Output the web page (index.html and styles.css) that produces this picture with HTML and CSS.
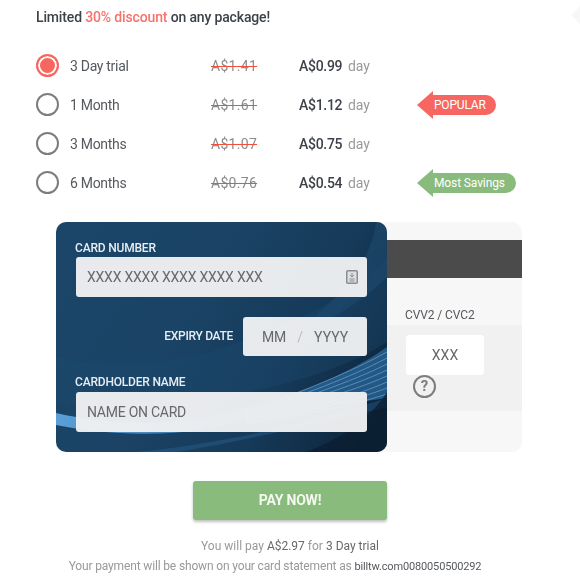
FILE: index.html
```html
<!DOCTYPE html>
<html lang="en">

<head>
  <meta charset="UTF-8">
  <meta name="viewport" content="width=device-width, initial-scale=1.0">
  <title>Payment</title>
  <link rel="stylesheet" href="styles.css">
</head>

<body>
  <div class="page">
    <span class="corner-mark"></span>
    <p class="promo">Limited <span class="promo-hot">30% discount</span> on any package!</p>

    <!-- Packages -->
    <div class="plans">
      <div class="plan">
        <span class="radio radio-on"></span>
        <span class="plan-name">3 Day trial</span>
        <span class="plan-old">A$1.41</span>
        <span class="plan-price">A$0.99</span>
        <span class="plan-unit">day</span>
      </div>
      <div class="plan">
        <span class="radio"></span>
        <span class="plan-name">1 Month</span>
        <span class="plan-old">A$1.61</span>
        <span class="plan-price">A$1.12</span>
        <span class="plan-unit">day</span>
        <span class="tag tag-red">POPULAR</span>
      </div>
      <div class="plan">
        <span class="radio"></span>
        <span class="plan-name">3 Months</span>
        <span class="plan-old">A$1.07</span>
        <span class="plan-price">A$0.75</span>
        <span class="plan-unit">day</span>
      </div>
      <div class="plan">
        <span class="radio"></span>
        <span class="plan-name">6 Months</span>
        <span class="plan-old">A$0.76</span>
        <span class="plan-price">A$0.54</span>
        <span class="plan-unit">day</span>
        <span class="tag tag-green">Most Savings</span>
      </div>
    </div>

    <!-- Card form -->
    <div class="card">
      <div class="card-front">
        <svg class="card-art" viewBox="0 0 331 230" preserveAspectRatio="none">
          <defs>
            <linearGradient id="waveFill" x1="0" y1="0" x2="1" y2="0">
              <stop offset="0" stop-color="#5a9fd8" />
              <stop offset="0.25" stop-color="#4a8cc4" />
              <stop offset="0.6" stop-color="#2b6a9f" stop-opacity=".7" />
              <stop offset="1" stop-color="#2a689c" stop-opacity=".75" />
            </linearGradient>
          </defs>
          <path d="M210 0H331V55C300 85 270 100 235 115C285 75 315 40 320 0Z" fill="#1f4d74" opacity=".5" />
          <path d="M0 135C70 150 130 140 190 118C250 96 300 70 331 35V120C285 150 220 165 150 180C90 190 40 190 0 180Z" fill="#1c4a70" opacity=".35" />
          <path d="M0 191C45 201 95 205 150 195C215 183 285 158 331 125V176C285 183 220 192 150 207C95 216 40 211 0 203Z" fill="url(#waveFill)" />
          <g fill="none" stroke="#7db4e0" stroke-width=".7" stroke-opacity=".8">
            <path d="M190 190C245 170 295 150 331 130" />
            <path d="M190 192C245 174 295 155 331 136" />
            <path d="M190 194C245 177 295 160 331 142" />
            <path d="M190 196C245 180 295 165 331 148" />
            <path d="M190 198C245 184 295 170 331 154" />
            <path d="M190 200C245 188 295 176 331 160" />
            <path d="M190 201C245 191 295 180 331 166" />
            <path d="M190 202C245 194 295 184 331 172" />
          </g>
          <path d="M80 230C160 222 240 205 331 176V185C250 205 170 222 120 230Z" fill="#2b6a9f" opacity=".35" />
          <path d="M250 230C290 215 315 195 331 170V230Z" fill="#0b1e30" opacity=".75" />
        </svg>

        <label class="field-label field-label-first">CARD NUMBER</label>
        <div class="input input-number">
          <span>XXXX XXXX XXXX XXXX XXX</span>
          <svg class="chip" viewBox="0 0 12 14">
            <rect x=".75" y=".75" width="10.5" height="12.5" rx="1" fill="#dcdfe2" stroke="#8b8d90" stroke-width="1.5" />
            <path d="M6 3v3.5M4.2 5.2L6 7l1.8-1.8M3.5 9h5M3.5 11h5" fill="none" stroke="#8b8d90" />
          </svg>
        </div>

        <div class="expiry">
          <label class="field-label expiry-label">EXPIRY DATE</label>
          <div class="input input-expiry">
            <span>MM</span>
            <span class="slash">/</span>
            <span>YYYY</span>
          </div>
        </div>

        <label class="field-label">CARDHOLDER NAME</label>
        <div class="input input-name">NAME ON CARD</div>
      </div>

      <div class="card-back">
        <div class="strip"></div>
        <label class="cvv-label">CVV2 / CVC2</label>
        <div class="cvv-band">
          <div class="cvv-input">XXX</div>
          <span class="help">?</span>
        </div>
      </div>
    </div>

    <!-- Pay -->
    <button class="pay-btn">PAY NOW!</button>
    <p class="note note-pay">You will pay <span class="note-strong">A$2.97</span> for <span class="note-strong">3 Day trial</span></p>
    <p class="note note-statement">Your payment will be shown on your card statement as <span class="note-dark">billtw.com0080050500292</span></p>
  </div>
</body>

</html>
```

FILE: styles.css
```css
/* General body styling */
body {
  font-family: Roboto, Arial, sans-serif;
  margin: 0;
  padding: 0;
  background: #fff;
  overflow: hidden;
}

.page {
  position: relative;
  width: 580px;
  height: 579px;
  overflow: hidden;
  filter: blur(0.35px);
}

/* Small faded diamond in the corner */
.corner-mark {
  position: absolute;
  top: 8px;
  right: -8px;
  width: 14px;
  height: 14px;
  background: #f7f7f7;
  transform: rotate(45deg);
}

.promo {
  margin: 0;
  padding: 9px 0 0 36px;
  font-size: 14px;
  line-height: 16px;
  font-weight: 500;
  letter-spacing: -0.15px;
  color: #3d4148;
}

.promo-hot {
  color: #f8716c;
}

/* Package rows */
.plans {
  margin-top: 21px;
  padding-left: 36px;
}

.plan {
  display: flex;
  align-items: center;
  height: 39px;
  font-size: 14px;
  color: #55585d;
}

.radio {
  box-sizing: border-box;
  flex: none;
  width: 23px;
  height: 23px;
  border: 2px solid #7d7d7d;
  border-radius: 50%;
}

.radio-on {
  border-color: #f76660;
  background: #f76660;
  box-shadow: inset 0 0 0 2px #fff;
}

.plan-name {
  width: 141px;
  margin-left: 11px;
  letter-spacing: -0.3px;
}

.plan-old {
  width: 88px;
  letter-spacing: 0.3px;
  color: #8c8c8c;
  text-decoration: line-through;
  text-decoration-color: #f2503f;
  text-decoration-thickness: 1.3px;
}

.plan-price {
  width: 49px;
  font-weight: 500;
  letter-spacing: -0.3px;
  color: #3d4148;
}

.plan-unit {
  width: 69px;
  letter-spacing: -0.1px;
  color: #999;
}

/* Arrow tags */
.tag {
  position: relative;
  height: 20px;
  margin-left: 16px;
  padding: 0 10px 0 1px;
  border-radius: 0 10px 10px 0;
  font-size: 12px;
  line-height: 20px;
  letter-spacing: -0.2px;
  color: #fff;
}

.tag::before {
  content: "";
  position: absolute;
  left: -16px;
  top: -4px;
  border-style: solid;
  border-width: 14px 16px 14px 0;
  border-color: transparent;
}

.tag-red {
  background: #f76660;
}

.tag-red::before {
  border-right-color: #f76660;
}

.tag-green {
  background: #88bb7c;
  padding-right: 11px;
  letter-spacing: -0.12px;
}

.tag-green::before {
  border-right-color: #88bb7c;
}

/* Card */
.card {
  display: flex;
  width: 466px;
  height: 230px;
  margin: 20px 0 0 56px;
  border-radius: 10px;
  background: #f7f7f7;
}

.card-front {
  position: relative;
  box-sizing: border-box;
  flex: none;
  width: 331px;
  padding: 18px 20px 0 20px;
  border-radius: 10px;
  overflow: hidden;
  background: linear-gradient(118deg, #1b4669 0%, #1a4365 40%, #163a59 68%, #0f2a42 88%, #0d2338 100%);
}

.card-art {
  position: absolute;
  left: 0;
  top: 0;
  width: 100%;
  height: 100%;
}

.field-label {
  position: relative;
  display: block;
  margin-left: -1px;
  font-size: 12px;
  line-height: 16px;
  font-weight: 500;
  letter-spacing: -0.2px;
  color: #e8edf2;
}

.input {
  position: relative;
  box-sizing: border-box;
  display: flex;
  align-items: center;
  height: 40px;
  border-radius: 3px;
  background: rgba(240, 241, 243, 0.96);
  font-size: 14px;
  color: #66686b;
}

.input-number {
  justify-content: space-between;
  margin-top: 1px;
  padding: 0 9px 0 11px;
  letter-spacing: -0.22px;
}

.chip {
  width: 12px;
  height: 14px;
}

.expiry {
  display: flex;
  justify-content: flex-end;
  align-items: center;
  gap: 10px;
  margin-top: 20px;
  margin-bottom: 18px;
}

.expiry-label {
  margin-bottom: 2px;
  letter-spacing: -0.3px;
}

.input-expiry {
  justify-content: center;
  gap: 11px;
  width: 124px;
  height: 39px;
}

.slash {
  color: #bcbcbc;
}

.input-name {
  margin-top: 2px;
  padding-left: 11px;
  letter-spacing: -0.25px;
}

/* Back side */
.card-back {
  flex: 1;
  padding-top: 18px;
  min-width: 0;
}

.strip {
  height: 38px;
  background: #4b4b4b;
}

.cvv-label {
  display: block;
  margin: 29px 0 0 18px;
  font-size: 12px;
  line-height: 16px;
  letter-spacing: -0.1px;
  color: #55585d;
}

.cvv-band {
  box-sizing: border-box;
  height: 86px;
  margin-top: 2px;
  padding: 10px 0 0 19px;
  background: #f1f1f1;
}

.cvv-input {
  width: 78px;
  height: 40px;
  border-radius: 3px;
  background: #fff;
  font-size: 14px;
  line-height: 40px;
  text-align: center;
  color: #66686b;
}

.help {
  box-sizing: border-box;
  display: block;
  width: 23px;
  height: 23px;
  margin: 0 0 0 7px;
  border: 2px solid #7d7d7d;
  border-radius: 50%;
  font-size: 15px;
  line-height: 19px;
  font-weight: 700;
  text-align: center;
  color: #7d7d7d;
}

/* Pay button */
.pay-btn {
  display: block;
  width: 194px;
  height: 39px;
  margin: 29px 0 0 193px;
  padding: 0 0 2px;
  border: none;
  border-radius: 3px;
  background: #88bb7c;
  box-shadow: 0 2px 3px rgba(0, 0, 0, 0.25);
  font-family: inherit;
  font-size: 14px;
  font-weight: 700;
  letter-spacing: -0.2px;
  color: #f3f8f1;
}

.note {
  margin: 0;
  font-size: 12px;
  line-height: 16px;
  text-align: center;
  color: #999;
}

.note-pay {
  margin-top: 18px;
  margin-bottom: 4px;
}

.note-statement {
  padding-right: 30px;
  letter-spacing: -0.15px;
}

.note-strong {
  color: #66686b;
}

.note-dark {
  font-size: 11px;
  color: #55585d;
}
```
